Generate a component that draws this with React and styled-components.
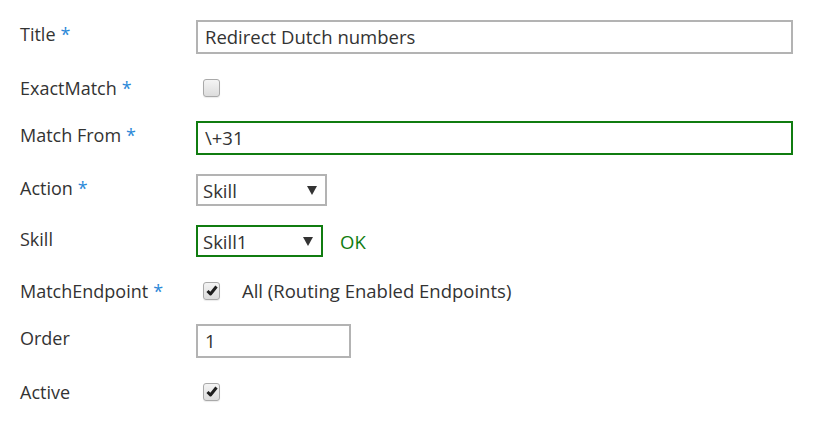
import styled, { createGlobalStyle } from 'styled-components';

const GlobalStyle = createGlobalStyle`
  body {
    margin: 0;
    background: #ffffff;
    font-family: 'Open Sans', 'Noto Sans', sans-serif;
    color: #333333;
  }
`;

const colors = {
  text: '#333333',
  border: '#b3b3b3',
  valid: '#107c10',
  required: '#2b88d8',
};

const Form = styled.form`
  display: flex;
  flex-direction: column;
  gap: 19px;
  padding: 20px 31px 0 20px;
`;

const Row = styled.div`
  display: grid;
  grid-template-columns: 176px 1fr;
  align-items: ${(p) => (p.$check ? 'center' : 'start')};
  height: ${(p) => (p.$check ? '29px' : 'auto')};
`;

const Label = styled.label`
  font-size: 18px;
  line-height: 24px;
  padding-top: ${(p) => (p.$check ? '0' : '2px')};
  color: ${colors.text};
`;

const Star = styled.span`
  color: ${colors.required};
  margin-left: 5px;
`;

const Field = styled.div`
  display: flex;
  align-items: center;
  gap: 17px;
`;

const TextInput = styled.div`
  box-sizing: border-box;
  width: ${(p) => p.$width || '100%'};
  height: 34px;
  border: 2px solid ${(p) => (p.$valid ? colors.valid : colors.border)};
  padding: 0 7px;
  font-size: 18.5px;
  line-height: 30px;
  color: ${colors.text};
`;

const Select = styled.div`
  box-sizing: border-box;
  display: flex;
  align-items: center;
  justify-content: space-between;
  width: ${(p) => p.$width};
  height: 32px;
  border: 2px solid ${(p) => (p.$valid ? colors.valid : colors.border)};
  padding: 0 8px 0 5px;
  font-size: 18.5px;
  color: ${colors.text};
`;

const Arrow = styled.span`
  width: 0;
  height: 0;
  border-left: 5px solid transparent;
  border-right: 5px solid transparent;
  border-top: 9px solid #333333;
`;

const Ok = styled.span`
  font-size: 18.5px;
  color: ${colors.valid};
`;

const Box = styled.span`
  box-sizing: border-box;
  display: inline-flex;
  align-items: center;
  justify-content: center;
  width: 17px;
  height: 18px;
  margin-left: 7px;
  border: 1px solid #a9a9a9;
  border-radius: 3px;
  background: linear-gradient(#f4f4f4, #dcdcdc);
  box-shadow: 0 1px 1px rgba(0, 0, 0, 0.08);
`;

const CheckText = styled.span`
  font-size: 18.5px;
  line-height: 24px;
  color: ${colors.text};
  margin-left: 5px;
`;

const Checkbox = ({ checked }) => (
  <Box>
    {checked && (
      <svg width="12" height="11" viewBox="0 0 12 11">
        <path d="M1.5 6 L4.5 9 L10.5 1.5" fill="none" stroke="#1e1e1e" strokeWidth="3" strokeLinejoin="round" />
      </svg>
    )}
  </Box>
);

const Required = () => <Star>*</Star>;

const App = () => (
  <>
    <GlobalStyle />
    <Form>
      <Row>
        <Label>Title<Required /></Label>
        <TextInput>Redirect Dutch numbers</TextInput>
      </Row>
      <Row $check>
        <Label $check>ExactMatch<Required /></Label>
        <Field><Checkbox /></Field>
      </Row>
      <Row>
        <Label>Match From<Required /></Label>
        <TextInput $valid>\+31</TextInput>
      </Row>
      <Row>
        <Label>Action<Required /></Label>
        <Field>
          <Select $width="131px">Skill<Arrow /></Select>
        </Field>
      </Row>
      <Row>
        <Label>Skill</Label>
        <Field>
          <Select $width="127px" $valid>Skill1<Arrow /></Select>
          <Ok>OK</Ok>
        </Field>
      </Row>
      <Row $check>
        <Label $check>MatchEndpoint<Required /></Label>
        <Field>
          <Checkbox checked />
          <CheckText>All (Routing Enabled Endpoints)</CheckText>
        </Field>
      </Row>
      <Row>
        <Label>Order</Label>
        <TextInput $width="155px">1</TextInput>
      </Row>
      <Row $check>
        <Label $check>Active</Label>
        <Field><Checkbox checked /></Field>
      </Row>
    </Form>
  </>
);

export default App;
